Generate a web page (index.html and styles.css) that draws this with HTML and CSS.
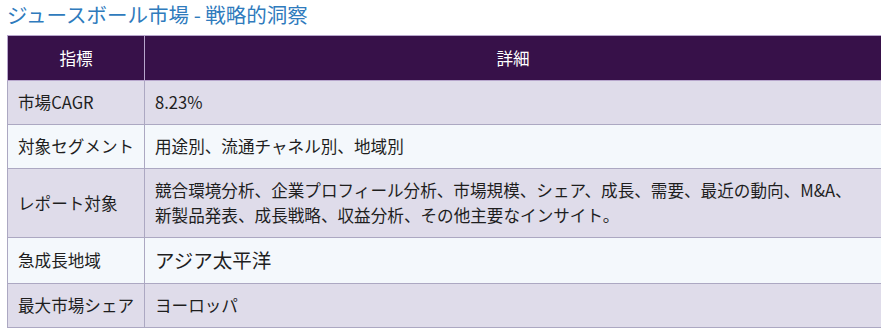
FILE: index.html
```html
<!DOCTYPE html>
<html lang="ja">
<head>
<meta charset="utf-8">
<link rel="stylesheet" href="styles.css">
</head>
<body>
<h2 class="title">ジュースボール市場 - 戦略的洞察</h2>
<table class="insight">
  <thead>
    <tr><th class="col-key">指標</th><th>詳細</th></tr>
  </thead>
  <tbody>
    <tr class="odd"><td>市場CAGR</td><td class="val">8.23%</td></tr>
    <tr class="even"><td>対象セグメント</td><td class="val">用途別、流通チャネル別、地域別</td></tr>
    <tr class="odd"><td>レポート対象</td><td class="val">競合環境分析、企業プロフィール分析、市場規模、シェア、成長、需要、最近の動向、M&amp;A、新製品発表、成長戦略、収益分析、その他主要なインサイト。</td></tr>
    <tr class="even"><td>急成長地域</td><td class="val"><span class="big">アジア太平洋</span></td></tr>
    <tr class="odd"><td>最大市場シェア</td><td class="val">ヨーロッパ</td></tr>
  </tbody>
</table>
</body>
</html>
```
FILE: styles.css
```css
html, body { background: #ffffff; }
body {
  margin: 0 5px 0 7px;
  font-family: "Noto Sans CJK JP", "Noto Sans", sans-serif;
  color: #1e1e1e;
}
.title {
  margin: 0 0 8px;
  padding-top: 1px;
  font-size: 20.5px;
  font-weight: 400;
  line-height: 26px;
  color: #2f7bbd;
}
.insight {
  width: 875px;
  border-collapse: collapse;
  font-size: 16.6px;
  line-height: 25px;
}
.insight th, .insight td {
  border: 1px solid #aca8c2;
  padding: 9px 8px 9px 10px;
  text-align: left;
  vertical-align: middle;
}
.insight td.val { padding-right: 20px; }
.insight th {
  background: #371149;
  color: #ffffff;
  font-weight: 400;
  text-align: center;
  padding: 10px 10px 9px;
  border-color: #b7a6cc;
}
.col-key { width: 116px; }
.odd td { background: #dfdcea; }
.even td { background: #f4f8fc; }
.big { font-size: 19.5px; }
```
